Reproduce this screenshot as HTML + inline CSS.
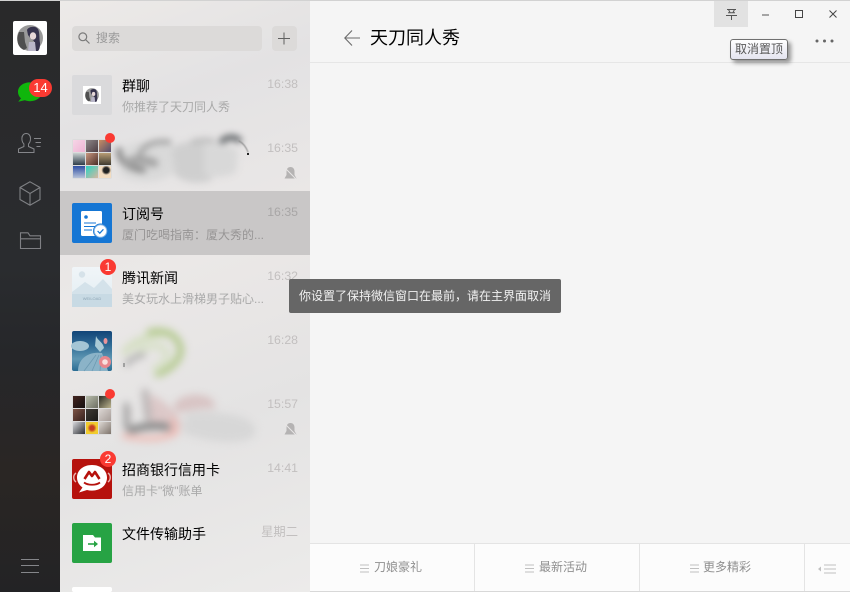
<!DOCTYPE html>
<html lang="zh"><head><meta charset="utf-8"><title>微信</title>
<style>
html,body{margin:0;padding:0;width:850px;height:592px;overflow:hidden;background:#f5f5f5}
body{position:relative;font-family:"Liberation Sans","Noto Sans CJK SC",sans-serif;color:#000}
.a{position:absolute}
svg{position:absolute;display:block;overflow:visible}
.t{position:absolute;left:122px;font-size:14px;line-height:20px;white-space:nowrap;color:#000}
.s{position:absolute;left:122px;font-size:12px;line-height:18px;white-space:nowrap;color:#a9a9a9}
.m{position:absolute;right:552px;font-size:12.300px;line-height:16px;white-space:nowrap;color:#c2bfbf}
.av{position:absolute;left:72px;width:40px;height:40px;border-radius:2px;overflow:hidden}
.b{position:absolute;background:#fa3a32;color:#fff;border-radius:50%;width:16px;height:16px;font-size:12px;line-height:16px;text-align:center}
.d{position:absolute;background:#fa3a32;border-radius:50%;width:10px;height:10px}
.tab{position:absolute;top:544px;height:47px;font-size:12px;line-height:47px;color:#8f8f8f;white-space:nowrap}
.g{display:grid;grid-template-columns:repeat(3,12px);grid-template-rows:repeat(3,12px);gap:1px;padding:1px;background:#dcdcdc;box-sizing:border-box;width:40px;height:40px}
.g i{display:block;width:12px;height:12px}
</style></head><body>

<div class="a" style="left:0;top:0;width:850px;height:1px;background:#d2d2d2;z-index:9"></div>

<!-- left nav -->
<div class="a" style="left:0;top:0;width:60px;height:592px;background:linear-gradient(180deg,#29292a 0%,#2a2c2f 45%,#26272a 60%,#2a2624 80%,#232325 100%)"></div>
<div class="a" style="left:13px;top:21px;width:34px;height:34px;background:#fff;border-radius:2px"></div>
<svg style="left:13px;top:21px" width="34" height="34" viewBox="0 0 34 34">
<circle cx="17" cy="17" r="13" fill="#9a9a9a"/><path d="M6 11c-3 7-2 15 5 18l3-2-2-6-1-10z" fill="#4f4f4f"/>
<path d="M14 9c1-3 8-5 11-1 2 4 1 9 2 14 0 3 0 6-2 8h-3l-1-10-3-2-3-4z" fill="#36334d"/><ellipse cx="20" cy="15" rx="3.200" ry="3.800" fill="#e6d7d8"/><path d="M16 21h6l1 9h-8z" fill="#b9b6c9"/></svg>

<svg style="left:18px;top:83px" width="24" height="20" viewBox="0 0 24 20"><path d="M12 0C5 0 0 4 0 9.500c0 2.500 1 4.800 3 6.500l-2.800 3.400 6.600-1.500c1.600.6 3.300.9 5.200.9 6.600 0 12-4.100 12-9.300S18.600 0 12 0z" fill="#0fb60c" transform="translate(0 -.6)"/></svg>
<div class="a" style="left:29px;top:79px;width:23px;height:18px;border-radius:9px;background:#fa3a32;color:#fff;font-size:13px;line-height:18px;text-align:center">14</div>

<svg style="left:18px;top:133px" width="24" height="20" viewBox="0 0 24 20" fill="none" stroke="#85868a" stroke-width="1"><path d="M.5 19.500h15.500v-3.500l-5.500-2.500v-2.500c1.500-1.500 2-3 2-5.500 0-3-1.800-5-4.300-5s-4.300 2-4.300 5c0 2.500.5 4 2 5.500v2.500L.5 16z"/><path d="M16 5.500h7M17.500 9.500h5.500M18.500 13.500h4"/></svg>
<svg style="left:19px;top:181px" width="22" height="25" viewBox="0 0 22 25" fill="none" stroke="#7f8084" stroke-width="1.100"><path d="M11 .8l10 5.700v12l-10 5.700-10-5.700v-12zM1 6.500l10 6 10-6M11 12.500v11.700"/></svg>
<svg style="left:20px;top:232px" width="21" height="17" viewBox="0 0 21 17" fill="none" stroke="#7f8084" stroke-width="1.100"><path d="M.5 16.500V.8h7.500l2 3h10.500v12.700zM.5 6.800h20"/></svg>
<svg style="left:21px;top:559px" width="18" height="14" viewBox="0 0 18 14" fill="none" stroke="#85868a" stroke-width="1"><path d="M0 .5h18M0 6.500h18M0 13.500h18"/></svg>

<!-- list column -->
<div class="a" style="left:60px;top:0;width:250px;height:592px;background:linear-gradient(160deg,#edeae8 0%,#e3e2e3 20%,#ebe8e7 45%,#e4e3e3 70%,#ecebea 100%);overflow:hidden">
  <div class="a" style="left:0;top:191px;width:250px;height:64px;background:#c9c7c7"></div>
  <div class="a" style="left:12px;top:26px;width:190px;height:25px;background:#dcdad9;border-radius:4px"></div>
  <svg style="left:18px;top:32px" width="12" height="12" viewBox="0 0 12 12" fill="none" stroke="#7a7a7a" stroke-width="1.200"><circle cx="4.800" cy="4.800" r="3.900"/><path d="M7.800 7.800l3.700 3.700"/></svg>
  <div class="a" style="left:36px;top:29px;font-size:12px;line-height:18px;color:#9a9a9a">搜索</div>
  <div class="a" style="left:212px;top:26px;width:25px;height:25px;background:#dcdad9;border-radius:4px"></div>
  <svg style="left:218px;top:32px" width="13" height="13" viewBox="0 0 13 13" fill="none" stroke="#606060" stroke-width="1"><path d="M0 6.500h12M6 .5v12"/></svg>
</div>

<!-- blurred ink names -->
<svg style="left:0;top:0" width="850" height="592" viewBox="0 0 850 592" fill="none" stroke-linecap="round">
  <g style="filter:blur(3.500px)">
    <path d="M120 152c8-12 42-14 54-6l-2 28c-14 10-38 10-52 0z" fill="#d9d9d9"/>
    <path d="M172 148c10-8 28-8 38-2l2 34c-12 5-30 3-38-6z" fill="#cfcfcf"/>
    <path d="M204 146c12-4 28-2 34 6l-2 20c-8 6-26 6-32 2z" fill="#d8d8d8"/>
    <path d="M139 156c3-9 12-16 30-14" stroke="#a3a3a3" stroke-width="5"/>
    <path d="M119 150c-1 10 8 18 24 20" stroke="#8a8a8a" stroke-width="6"/>
    <path d="M128 162c8-3 16-3 26 1" stroke="#a5a5a5" stroke-width="9"/>
    <path d="M222 141c5-4 12-5 17-1" stroke="#65696c" stroke-width="6"/>
    <path d="M193 142c6-2 14-2 20-1" stroke="#bdbdbd" stroke-width="5"/>
  </g>
  <g style="filter:blur(.6px)"><path d="M239 141c4 2 7 6 9 11" stroke="#8a8a8a" stroke-width="1"/></g>
  <rect x="247" y="153" width="2" height="2" fill="#222" />
  <g style="filter:blur(4px)">
    <path d="M125 352c8-11 24-17 45-19" stroke="#d3dec0" stroke-width="7"/>
    <path d="M150 332c14-3 26 2 30 14 3 10-6 22-22 28" stroke="#b6cb92" stroke-width="7"/>
    <path d="M140 350c12-6 22-6 26 2 3 6-2 12-10 16" stroke="#d9e1cb" stroke-width="8"/>
    <path d="M127 364c5-6 10-8 16-9" stroke="#acacac" stroke-width="5"/>
  </g>
  <rect x="123" y="363" width="2" height="4" fill="#a0a0a0"/>
  <g style="filter:blur(4px)">
    <path d="M186 414c10-4 42-2 58 4 14 6 16 18 2 22-18 5-46 0-64-8z" fill="#d7d7d7"/>
    <path d="M174 403c8-8 24-12 38-4l4 10c-12-2-28 2-40 4z" fill="#d8c4c4"/>
    <path d="M150 394c10 4 28 16 32 32l-10 8-22-10z" fill="#dcc8c8"/>
    <path d="M127 408v18M145 392l3 26" stroke="#bab5b5" stroke-width="7"/>
    <path d="M126 404v24" stroke="#9c9c9c" stroke-width="4"/>
    <path d="M131 430c12-4 26-5 36-3" stroke="#838383" stroke-width="7"/>
    <path d="M124 436c16 4 42 4 52-4l-3-12" stroke="#efb9b2" stroke-width="5"/>
  </g>
</svg>

<!-- avatars -->
<div class="av" style="top:75px;background:#dadadc"></div>
<div class="a" style="left:83px;top:86px;width:18px;height:18px;background:#fff"></div>
<svg style="left:83px;top:86px" width="18" height="18" viewBox="0 0 34 34"><circle cx="17" cy="17" r="13" fill="#9a9a9a"/><path d="M6 11c-3 7-2 15 5 18l3-2-2-6-1-10z" fill="#4f4f4f"/><path d="M14 9c1-3 8-5 11-1 2 4 1 9 2 14 0 3 0 6-2 8h-3l-1-10-3-2-3-4z" fill="#36334d"/><ellipse cx="20" cy="15" rx="3.200" ry="3.800" fill="#e6d7d8"/><path d="M16 21h6l1 9h-8z" fill="#b9b6c9"/></svg>

<div class="av g" style="top:139px">
<i style="background:linear-gradient(135deg,#f6d5e6,#eeb4d4)"></i><i style="background:linear-gradient(135deg,#8d8689,#4d3d42)"></i><i style="background:linear-gradient(135deg,#c78d62,#514b6c)"></i>
<i style="background:linear-gradient(180deg,#c9d1d0,#2f3d4a)"></i><i style="background:linear-gradient(135deg,#c8977f,#4b2d28)"></i><i style="background:linear-gradient(180deg,#b89d75,#3f3a30)"></i>
<i style="background:linear-gradient(180deg,#2e4fa5,#b8c3d8)"></i><i style="background:linear-gradient(135deg,#2cd3c2,#d7b7a0)"></i><i style="background:radial-gradient(circle at 60% 35%,#222 25%,#f3dcc0 45%)"></i></div>
<div class="d" style="left:105px;top:133px"></div>

<div class="av" style="top:203px;background:#1576d4"></div>
<svg style="left:72px;top:203px" width="40" height="40" viewBox="0 0 40 40"><rect x="9" y="8" width="21" height="25" rx="1.500" fill="#fff"/><circle cx="14" cy="14" r="1.800" fill="#1576d4"/><path d="M12 20h12M12 23.500h12M12 27h8" stroke="#1576d4" stroke-width="1.100"/><circle cx="28.500" cy="28" r="7.500" fill="#1576d4"/><circle cx="28.500" cy="28" r="6.300" fill="#fff" stroke="#7fb2e5" stroke-width="1"/><path d="M25.600 28l2.200 2.200 3.600-3.900" fill="none" stroke="#1576d4" stroke-width="1.200"/></svg>

<div class="av" style="top:267px;background:linear-gradient(180deg,#f0f5f8,#e3edf2)"></div>
<svg style="left:72px;top:267px" width="40" height="40" viewBox="0 0 40 40"><circle cx="10" cy="7.500" r="3.200" fill="#d6e2e9"/><path d="M0 25l13-10 9 6 9-9 9 10v18H0z" fill="#d4e2ea"/><path d="M0 27h40v13H0z" fill="#c8dae4"/><text x="20" y="33" font-size="4" text-anchor="middle" fill="#8ca5b5" font-family="Liberation Sans,Noto Sans CJK SC,sans-serif">WEILOAD</text></svg>
<div class="b" style="left:100px;top:259px">1</div>

<div class="av" style="top:331px;background:linear-gradient(180deg,#124578 0%,#2f6b95 35%,#5f97b3 70%,#2a6c93 100%)"></div>
<svg style="left:72px;top:331px" width="40" height="40" viewBox="0 0 40 40"><ellipse cx="8" cy="15" rx="9" ry="5" fill="#a4c5d5"/><path d="M6 40c0-12 10-20 24-18l6 18z" fill="#8bb3c8"/><path d="M12 40L24 24M20 40l7-16M28 40l1-16" stroke="#6c9ab2" stroke-width=".8"/><circle cx="33" cy="31" r="6" fill="#e8878d"/><circle cx="33" cy="31" r="2.800" fill="#f9e0de"/><path d="M24 5c2 5 7 6 8 12l-4 4-5-6z" fill="#a9cad6"/><ellipse cx="33.500" cy="10" rx="2" ry="3" fill="#e9949a"/></svg>

<div class="av g" style="top:395px">
<i style="background:linear-gradient(135deg,#43241f,#151010)"></i><i style="background:linear-gradient(135deg,#b7bcab,#6e6f63)"></i><i style="background:linear-gradient(135deg,#2a2a22,#bcb48e)"></i>
<i style="background:linear-gradient(135deg,#7d5446,#35211d)"></i><i style="background:linear-gradient(135deg,#3e3a34,#1b1a18)"></i><i style="background:linear-gradient(135deg,#dcd6d3,#a79d98)"></i>
<i style="background:linear-gradient(135deg,#d8d8dc,#2d2f34)"></i><i style="background:radial-gradient(circle,#c73e21 25%,#f1cc2d 55%)"></i><i style="background:linear-gradient(135deg,#ddd8d3,#7e746c)"></i></div>
<div class="d" style="left:105px;top:389px"></div>

<div class="av" style="top:459px;background:#b6120d"></div>
<svg style="left:72px;top:459px" width="40" height="40" viewBox="0 0 40 40"><path d="M20 6c-9 0-15 5.500-15 12.500 0 4 2 7.500 5.500 10L7 33.500l8-2.500c1.600.4 3.300.6 5 .6 8.800 0 15-5.700 15-13C35 11.500 28.800 6 20 6z" fill="#fff"/><path d="M12.500 20l4.500-7 3 4 3-4 4.500 7" fill="none" stroke="#b6120d" stroke-width="2.600" stroke-linejoin="round"/><path d="M12 23.500c4 3 12 3 16 0" fill="none" stroke="#b6120d" stroke-width="1.800"/><path d="M4 14c-3 2-3 7 0 9M36 14c3 2 3 7 0 9" fill="none" stroke="#ecb5b1" stroke-width="1.400"/></svg>
<div class="b" style="left:100px;top:451px">2</div>

<div class="av" style="top:523px;background:#27a344"></div>
<svg style="left:72px;top:523px" width="40" height="40" viewBox="0 0 40 40"><path d="M11 12h10l2 2.500h6V28H11z" fill="#fff"/><path d="M16 21h7" stroke="#27a344" stroke-width="1.600"/><path d="M22 17.800l4 3.200-4 3.200z" fill="#27a344"/></svg>
<div class="av" style="top:587px;background:#fff;height:5px"></div>

<!-- list text -->
<div class="t" style="top:76px">群聊</div><div class="s" style="top:98px">你推荐了天刀同人秀</div><div class="m" style="top:76px">16:38</div>
<div class="m" style="top:140px">16:35</div>
<div class="t" style="top:204px">订阅号</div><div class="s" style="top:226px;color:#979595">厦门吃喝指南：厦大秀的...</div><div class="m" style="top:204px;color:#a8a6a6">16:35</div>
<div class="t" style="top:268px">腾讯新闻</div><div class="s" style="top:290px">美女玩水上滑梯男子贴心...</div><div class="m" style="top:268px">16:32</div>
<div class="m" style="top:332px">16:28</div>
<div class="m" style="top:396px">15:57</div>
<div class="t" style="top:460px">招商银行信用卡</div><div class="s" style="top:482px">信用卡"微"账单</div><div class="m" style="top:460px">14:41</div>
<div class="t" style="top:524px">文件传输助手</div><div class="m" style="top:524px">星期二</div>

<svg style="left:284px;top:167px" width="13" height="13" viewBox="0 0 13 13"><path d="M6.500 0c2.700 0 4 2 4 4.500V8l2 3.500H.5l2-3.500V4.500C2.500 2 3.800 0 6.500 0z" fill="#b5b3b3"/><path d="M.5.500l12 12" stroke="#e8e6e6" stroke-width="1"/></svg>
<svg style="left:284px;top:423px" width="13" height="13" viewBox="0 0 13 13"><path d="M6.500 0c2.700 0 4 2 4 4.500V8l2 3.500H.5l2-3.500V4.500C2.500 2 3.800 0 6.500 0z" fill="#b5b3b3"/><path d="M.5.500l12 12" stroke="#e8e6e6" stroke-width="1"/></svg>

<!-- chat header -->
<div class="a" style="left:310px;top:62px;width:540px;height:1px;background:#e6e6e6"></div>
<div class="a" style="left:714px;top:1px;width:34px;height:26px;background:#e2e2e2"></div>
<svg style="left:726px;top:9px" width="11" height="11" viewBox="0 0 11 11" fill="none" stroke="#555" stroke-width="1"><path d="M1 .5h9M2.500 .5l1.500 3M8.500 .5l-1.500 3M0 6.500h11M5.500 6.500v4.500M2 3.800h7"/></svg>
<svg style="left:761px;top:14px" width="9" height="2" viewBox="0 0 9 2"><path d="M1 1h7" stroke="#555" stroke-width="1"/></svg>
<svg style="left:795px;top:10px" width="8" height="8" viewBox="0 0 8 8"><rect x=".5" y=".5" width="7" height="7" fill="none" stroke="#444" stroke-width="1"/></svg>
<svg style="left:829px;top:10px" width="8" height="8" viewBox="0 0 8 8"><path d="M.5.500l7 7M7.500.500l-7 7" stroke="#444" stroke-width="1"/></svg>

<svg style="left:344px;top:30px" width="17" height="16" viewBox="0 0 17 16" fill="none" stroke="#6b6b6b" stroke-width="1.100"><path d="M8 .5L.8 8 8 15.500M.8 8H16"/></svg>
<div class="a" style="left:370px;top:26px;font-size:18px;line-height:24px;color:#000;white-space:nowrap">天刀同人秀</div>
<svg style="left:815px;top:39px" width="19" height="4" viewBox="0 0 19 4" fill="#666"><circle cx="2" cy="2" r="1.500"/><circle cx="9.500" cy="2" r="1.500"/><circle cx="17" cy="2" r="1.500"/></svg>

<div class="a" style="left:730px;top:39px;width:58px;height:21px;box-sizing:border-box;border:1px solid #707070;border-radius:3px;background:linear-gradient(180deg,#ffffff,#e4e4f0);box-shadow:3px 3px 4px rgba(0,0,0,.4);font-size:12px;line-height:19px;text-align:center;color:#575757;white-space:nowrap">取消置顶</div>

<!-- toast -->
<div class="a" style="left:289px;top:279px;width:272px;height:34px;background:#666;border-radius:2px;color:#f2f2f2;font-size:12px;line-height:34px;text-align:center;white-space:nowrap;z-index:3">你设置了保持微信窗口在最前，请在主界面取消</div>

<!-- bottom tabs -->
<div class="a" style="left:310px;top:543px;width:540px;height:48px;background:#fcfcfc;border-top:1px solid #e4e4e4;box-sizing:border-box"></div>
<div class="a" style="left:474px;top:544px;width:1px;height:47px;background:#e4e4e4"></div>
<div class="a" style="left:639px;top:544px;width:1px;height:47px;background:#e4e4e4"></div>
<div class="a" style="left:804px;top:544px;width:1px;height:47px;background:#e4e4e4"></div>
<div class="a" style="left:310px;top:591px;width:540px;height:1px;background:#d8d8d8"></div>
<svg style="left:360px;top:564px" width="9" height="9" viewBox="0 0 9 9" stroke="#c0c0c0" stroke-width="1"><path d="M0 1h9M0 4.500h9M0 8h9"/></svg>
<div class="tab" style="left:374px">刀娘豪礼</div>
<svg style="left:525px;top:564px" width="9" height="9" viewBox="0 0 9 9" stroke="#c0c0c0" stroke-width="1"><path d="M0 1h9M0 4.500h9M0 8h9"/></svg>
<div class="tab" style="left:539px">最新活动</div>
<svg style="left:690px;top:564px" width="9" height="9" viewBox="0 0 9 9" stroke="#c0c0c0" stroke-width="1"><path d="M0 1h9M0 4.500h9M0 8h9"/></svg>
<div class="tab" style="left:703px">更多精彩</div>
<svg style="left:818px;top:564px" width="18" height="10" viewBox="0 0 18 10"><path d="M0 5l3-2.500v5z" fill="#c0c0c0"/><path d="M6 1h12M6 5h12M6 9h12" stroke="#c0c0c0" stroke-width="1"/></svg>

</body></html>
